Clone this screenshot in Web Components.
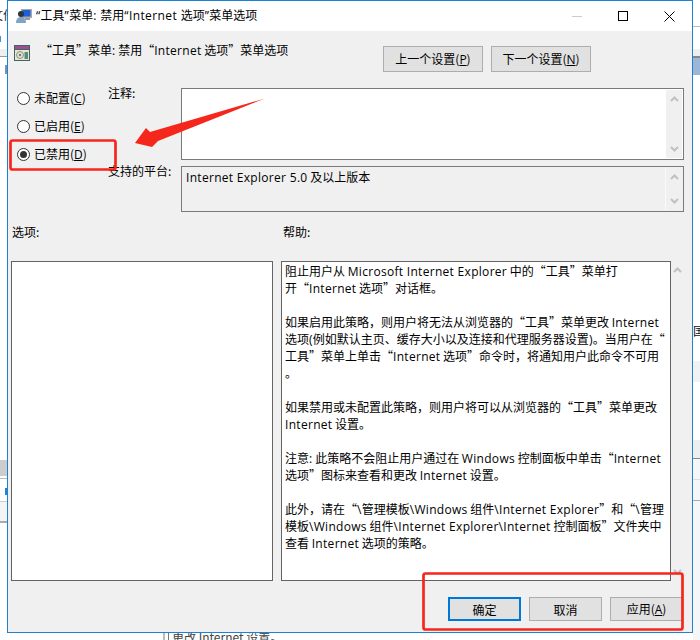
<!DOCTYPE html>
<html lang="zh-CN">
<head>
<meta charset="utf-8">
<title>“工具”菜单: 禁用“Internet 选项”菜单选项</title>
<style>
  html, body { margin: 0; padding: 0; width: 700px; height: 640px; overflow: hidden; background: #fff; }
  body { font: 12px "Noto Sans CJK SC", "Noto Sans", sans-serif; color: #000; }
</style>
</head>
<body>
<policy-desktop>
  <policy-window title-text="“工具”菜单: 禁用“Internet 选项”菜单选项">
    <policy-editor></policy-editor>
  </policy-window>
  <policy-markup></policy-markup>
</policy-desktop>

<script>
  // Latin runs get a wider font than the CJK one, quotes stay full width
  const latin = (str) => str.replace(/[A-Za-z0-9.:()\\-]+(?: [A-Za-z0-9.:()\\-]+)*/g, '<span class="l">$&</span>');
  const LATIN_CSS = `.l { font-family: "Open Sans", "Noto Sans", sans-serif; font-size: 12px; letter-spacing: .3px; }`;

  class PolicyDesktop extends HTMLElement {
    constructor() {
      super();
      this.attachShadow({ mode: 'open' });
      this.shadowRoot.innerHTML = `
        <style>
          :host { display: block; position: relative; width: 700px; height: 640px; overflow: hidden; background: #fff; }
          .f { position: absolute; }
          .t { position: absolute; white-space: nowrap; color: #222; font-size: 12px; }
        </style>
        <div class="t" style="left:-9px;top:6px">文件</div>
        <div class="f" style="left:0;top:36px;width:1px;height:6px;background:#4a90d0"></div>
        <div class="f" style="left:0;top:49px;width:7px;height:7px;background:#eee"></div>
        <div class="f" style="left:0;top:56px;width:7px;height:1px;background:#999"></div>
        <div class="f" style="left:5px;top:65px;width:2px;height:9px;background:#7c93b0"></div>
        <div class="f" style="left:0;top:460px;width:7px;height:16px;background:#ccc"></div>
        <div class="f" style="left:0;top:478px;width:7px;height:1px;background:#bbb"></div>
        <div class="f" style="left:5px;top:488px;width:2px;height:7px;background:#2a7fd0"></div>
        <div class="f" style="left:0;top:501px;width:7px;height:1px;background:#ccc"></div>
        <div class="f" style="left:0;top:502px;width:7px;height:19px;background:#f4f4f4"></div>
        <div class="f" style="left:0;top:521px;width:7px;height:2px;background:#aaa"></div>

        <div class="f" style="left:693px;top:26px;width:7px;height:1px;background:#bbb"></div>
        <div class="f" style="left:693px;top:49px;width:7px;height:7px;background:#eee"></div>
        <div class="f" style="left:693px;top:56px;width:7px;height:2px;background:#888"></div>
        <div class="f" style="left:693px;top:58px;width:7px;height:17px;background:#9db6d6"></div>
        <div class="t" style="left:693px;top:322px;color:#111">国</div>
        <div class="f" style="left:693px;top:361px;width:7px;height:21px;background:#f2f2f2"></div>
        <div class="f" style="left:693px;top:440px;width:7px;height:200px;background:#f6f6f6"></div>
        <div class="f" style="left:693px;top:440px;width:7px;height:18px;background:#eee"></div>
        <div class="f" style="left:693px;top:458px;width:7px;height:1px;background:#888"></div>
        <div class="f" style="left:693px;top:479px;width:7px;height:1px;background:#ddd"></div>
        <div class="f" style="left:693px;top:500px;width:7px;height:1px;background:#aaa"></div>

        <div class="f" style="left:163px;top:633px;width:2px;height:7px;background:#bbb"></div>
        <div class="f" style="left:168px;top:633px;width:1px;height:7px;background:#777"></div>
        <div class="t" style="left:172px;top:628px;color:#444">更改 Internet 设置。</div>
        <slot></slot>
      `;
    }
  }

  class PolicyWindow extends HTMLElement {
    constructor() {
      super();
      this.attachShadow({ mode: 'open' });
      this.shadowRoot.innerHTML = `
        <style>
          :host {
            position: absolute; left: 7px; top: 0; box-sizing: border-box;
            width: 686px; height: 633px; border: 1px solid #1883d7;
            display: flex; flex-direction: column; background: #f0f0f0;
          }
          header { height: 30px; flex: none; display: flex; align-items: center; background: #fff; }
          .app { width: 16px; height: 16px; margin-left: 8px; margin-right: 4px; flex: none; }
          .title { flex: 1; white-space: nowrap; font-size: 12px; line-height: 17px; height: 17px; margin-bottom: 3px; }
          .title .l { font-family: "Open Sans", sans-serif; font-size: 12px; letter-spacing: .4px; }
          .ctl { width: 46px; height: 30px; flex: none; display: flex; align-items: center; justify-content: center; }
          .ctl svg { display: block; }
          main { flex: 1; min-height: 0; }
        </style>
        <header>
          <svg class="app" viewBox="0 0 16 16">
            <rect x="5" y="1" width="11" height="9" fill="#a9a9a9"/>
            <rect x="6.500" y="2" width="8" height="6.500" fill="#1f5fd6"/>
            <rect x="9" y="10" width="5" height="2" fill="#9a9a9a"/>
            <circle cx="5" cy="6" r="3" fill="#2b3440"/>
            <path d="M0 15c0-4 2-6 5-6s5 2 5 6z" fill="#7fa4c4"/>
          </svg>
          <div class="title" id="title"></div>
          <div class="ctl"><svg width="10" height="10"><path d="M0 5.500h10" stroke="#ccc"/></svg></div>
          <div class="ctl"><svg width="10" height="10"><rect x=".5" y=".5" width="9" height="9" fill="none" stroke="#000"/></svg></div>
          <div class="ctl"><svg width="11" height="11"><path d="M.5.5l10 10M10.500.5l-10 10" stroke="#000" fill="none"/></svg></div>
        </header>
        <main><slot></slot></main>
      `;
    }

    connectedCallback() {
      // the title bar font has narrow quotes, so they go in the Latin run too
      const title = this.getAttribute('title-text') || '';
      this.shadowRoot.querySelector('#title').innerHTML = title.replace(/[“”:A-Za-z ]+/g, '<span class="l">$&</span>');
    }
  }

  class PolicyButton extends HTMLElement {
    constructor() {
      super();
      this.attachShadow({ mode: 'open' });
      this.shadowRoot.innerHTML = `
        <style>
          :host {
            display: flex; align-items: center; justify-content: center; box-sizing: border-box;
            height: var(--btn-h, 24px); width: var(--btn-w, 73px);
            background: #e1e1e1; border: 1px solid #adadad; font-size: 12px; white-space: nowrap;
          }
          :host([primary]) { border: 2px solid #0078d7; }
          ::slotted(u) { font-family: "Open Sans", sans-serif; }
        </style>
        <span><slot></slot></span>
      `;
    }
  }

  class PolicyRadio extends HTMLElement {
    constructor() {
      super();
      this.attachShadow({ mode: 'open' });
      this.shadowRoot.innerHTML = `
        <style>
          :host { display: flex; align-items: center; gap: 4px; height: 14px; font-size: 12px; white-space: nowrap; }
          .dot {
            width: 13px; height: 13px; box-sizing: border-box; border: 1px solid #333; border-radius: 50%;
            background: #fff; display: flex; align-items: center; justify-content: center; flex: none;
          }
          :host([checked]) .dot::after { content: ""; width: 7px; height: 7px; border-radius: 50%; background: #333; }
          ::slotted(u) { font-family: "Open Sans", sans-serif; }
        </style>
        <span class="dot"></span><span><slot></slot></span>
      `;
    }
  }

  class PolicyBox extends HTMLElement {
    constructor() {
      super();
      this.attachShadow({ mode: 'open' });
      this.shadowRoot.innerHTML = `
        <style>
          :host { display: flex; box-sizing: border-box; border: 1px solid #7a7a7a; background: #fff; min-width: 0; }
          :host([readonly]) { background: #f0f0f0; }
          .body { flex: 1; min-width: 0; padding: 0 4px; }
          .bar {
            width: 16px; flex: none; margin: 1px 1px 1px 0; background: #f0f0f0;
            display: flex; flex-direction: column; justify-content: space-between; align-items: center; padding: 6px 0;
            box-sizing: border-box;
          }
          :host([readonly]) .bar { border-left: 1px solid #fafafa; width: 17px; }
          svg { display: block; }
        </style>
        <div class="body"><slot></slot></div>
        <div class="bar">
          <svg width="9" height="6"><path d="M1 5l3.500-3.500L8 5" fill="none" stroke="#c0c0c0" stroke-width="2"/></svg>
          <svg width="9" height="6"><path d="M1 1l3.500 3.500L8 1" fill="none" stroke="#c0c0c0" stroke-width="2"/></svg>
        </div>
      `;
    }
  }

  class PolicyEditor extends HTMLElement {
    constructor() {
      super();
      this.attachShadow({ mode: 'open' });
      const help = [
        '阻止用户从 Microsoft Internet Explorer 中的“工具”菜单打',
        '开“Internet 选项”对话框。',
        '',
        '如果启用此策略，则用户将无法从浏览器的“工具”菜单更改 Internet',
        '选项(例如默认主页、缓存大小以及连接和代理服务器设置)。当用户在“',
        '工具”菜单上单击“Internet 选项”命令时，将通知用户此命令不可用',
        '。',
        '',
        '如果禁用或未配置此策略，则用户将可以从浏览器的“工具”菜单更改',
        'Internet 设置。',
        '',
        '注意: 此策略不会阻止用户通过在 Windows 控制面板中单击“Internet',
        '选项”图标来查看和更改 Internet 设置。',
        '',
        '此外，请在“\\管理模板\\Windows 组件\\Internet Explorer”和“\\管理',
        '模板\\Windows 组件\\Internet Explorer\\Internet 控制面板”文件夹中',
        '查看 Internet 选项的策略。'
      ].map((line) => `<div class="line">${line ? latin(line) : '&nbsp;'}</div>`).join('');

      this.shadowRoot.innerHTML = `
        <style>
          :host { display: flex; flex-direction: column; height: 100%; padding: 0 8px 0 3px; box-sizing: border-box; font-size: 12px; }
          ${LATIN_CSS}
          .head { display: flex; height: 57px; flex: none; }
          .head svg { margin: 14px 0 0 3px; flex: none; }
          .head .name { margin: 10px 0 0 10px; height: 18px; line-height: 18px; flex: 1; white-space: nowrap; }
          .nav { display: flex; gap: 8px; margin: 15px 93px 0 0; --btn-w: 100px; --btn-h: 26px; }
          .settings { display: grid; grid-template-columns: 97px 73px 1fr; grid-template-rows: 72px 46px; row-gap: 6px; flex: none; }
          .radios { grid-row: 1 / 3; display: flex; flex-direction: column; gap: 14px; padding: 3px 0 0 6px; }
          .lab { white-space: nowrap; line-height: 17px; height: 17px; }
          .lab.note { margin-top: -4px; }
          .lab.plat { margin-top: -4px; }
          .titles { display: grid; grid-template-columns: 272px 1fr; height: 49px; flex: none; padding-top: 11px; box-sizing: border-box; line-height: 17px; }
          .titles span:first-child { padding-left: 1px; }
          .panes { display: grid; grid-template-columns: 262px 1fr; column-gap: 8px; height: 320px; flex: none; }
          .pane { border: 1px solid #646464; background: #fff; box-sizing: border-box; }
          .helpwrap { display: flex; min-width: 0; }
          .helptext { flex: 1; min-width: 0; padding: 0 3px; white-space: nowrap; }
          .line { height: 17px; line-height: 17px; }
          .rail { width: 13px; flex: none; display: flex; flex-direction: column; justify-content: space-between; align-items: center; padding: 6px 0 6px; box-sizing: border-box; }
          .rail svg { display: block; }
          .foot { display: flex; justify-content: flex-end; gap: 8px; margin-top: 16px; padding-right: 1px; }
          u { text-underline-offset: 1px; }
          .platbody { height: 17px; line-height: 17px; white-space: nowrap; padding-top: 1px; }
        </style>
        <div class="head">
          <svg width="16" height="16" viewBox="0 0 16 16">
            <rect width="16" height="16" fill="#44606a"/>
            <rect x="1" y="1" width="14" height="3" fill="#a04f8e"/>
            <rect x="1" y="5" width="14" height="10" fill="#e8e8d0"/>
            <circle cx="6" cy="10" r="3.500" fill="#dcdcdc" stroke="#8a9a70"/>
            <circle cx="6" cy="10" r="1" fill="#556"/>
            <rect x="10.500" y="7" width="3.500" height="7" fill="#5a8a7a"/>
          </svg>
          <div class="name">${latin('“工具”菜单: 禁用“Internet 选项”菜单选项')}</div>
          <div class="nav">
            <policy-button>上一个设置(<u>P</u>)</policy-button>
            <policy-button>下一个设置(<u>N</u>)</policy-button>
          </div>
        </div>
        <div class="settings">
          <div class="radios">
            <policy-radio>未配置(<u>C</u>)</policy-radio>
            <policy-radio>已启用(<u>E</u>)</policy-radio>
            <policy-radio checked>已禁用(<u>D</u>)</policy-radio>
          </div>
          <div class="lab note">注释:</div>
          <policy-box></policy-box>
          <div class="lab plat">支持的平台:</div>
          <policy-box readonly><div class="platbody">${latin('Internet Explorer 5.0 及以上版本')}</div></policy-box>
        </div>
        <div class="titles"><span>选项:</span><span>帮助:</span></div>
        <div class="panes">
          <div class="pane"></div>
          <div class="helpwrap">
            <div class="pane helptext">${help}</div>
            <div class="rail">
              <svg width="9" height="6"><path d="M1 5l3.500-3.500L8 5" fill="none" stroke="#c0c0c0" stroke-width="2"/></svg>
              <svg width="9" height="6"><path d="M1 1l3.500 3.500L8 1" fill="none" stroke="#c0c0c0" stroke-width="2"/></svg>
            </div>
          </div>
        </div>
        <div class="foot">
          <policy-button primary>确定</policy-button>
          <policy-button>取消</policy-button>
          <policy-button>应用(<u>A</u>)</policy-button>
        </div>
      `;
    }
  }

  // red annotations painted on top of the screenshot
  class PolicyMarkup extends HTMLElement {
    constructor() {
      super();
      this.attachShadow({ mode: 'open' });
      this.shadowRoot.innerHTML = `
        <style>
          :host { position: absolute; left: 0; top: 0; width: 700px; height: 640px; pointer-events: none; }
          svg { display: block; }
        </style>
        <svg width="700" height="640" viewBox="0 0 700 640">
          <rect x="10.500" y="140.500" width="105" height="29" rx="2" fill="none" stroke="#f5261c" stroke-width="2.700"/>
          <rect x="423.500" y="573.500" width="259" height="56" rx="2" fill="none" stroke="#f5261c" stroke-width="2.700"/>
          <path d="M135 143 L146 128 L150 132 L265 98.500 L158 141 L152 147 Z" fill="#f5261c"/>
        </svg>
      `;
    }
  }

  customElements.define('policy-button', PolicyButton);
  customElements.define('policy-radio', PolicyRadio);
  customElements.define('policy-box', PolicyBox);
  customElements.define('policy-editor', PolicyEditor);
  customElements.define('policy-window', PolicyWindow);
  customElements.define('policy-markup', PolicyMarkup);
  customElements.define('policy-desktop', PolicyDesktop);
</script>
</body>
</html>
